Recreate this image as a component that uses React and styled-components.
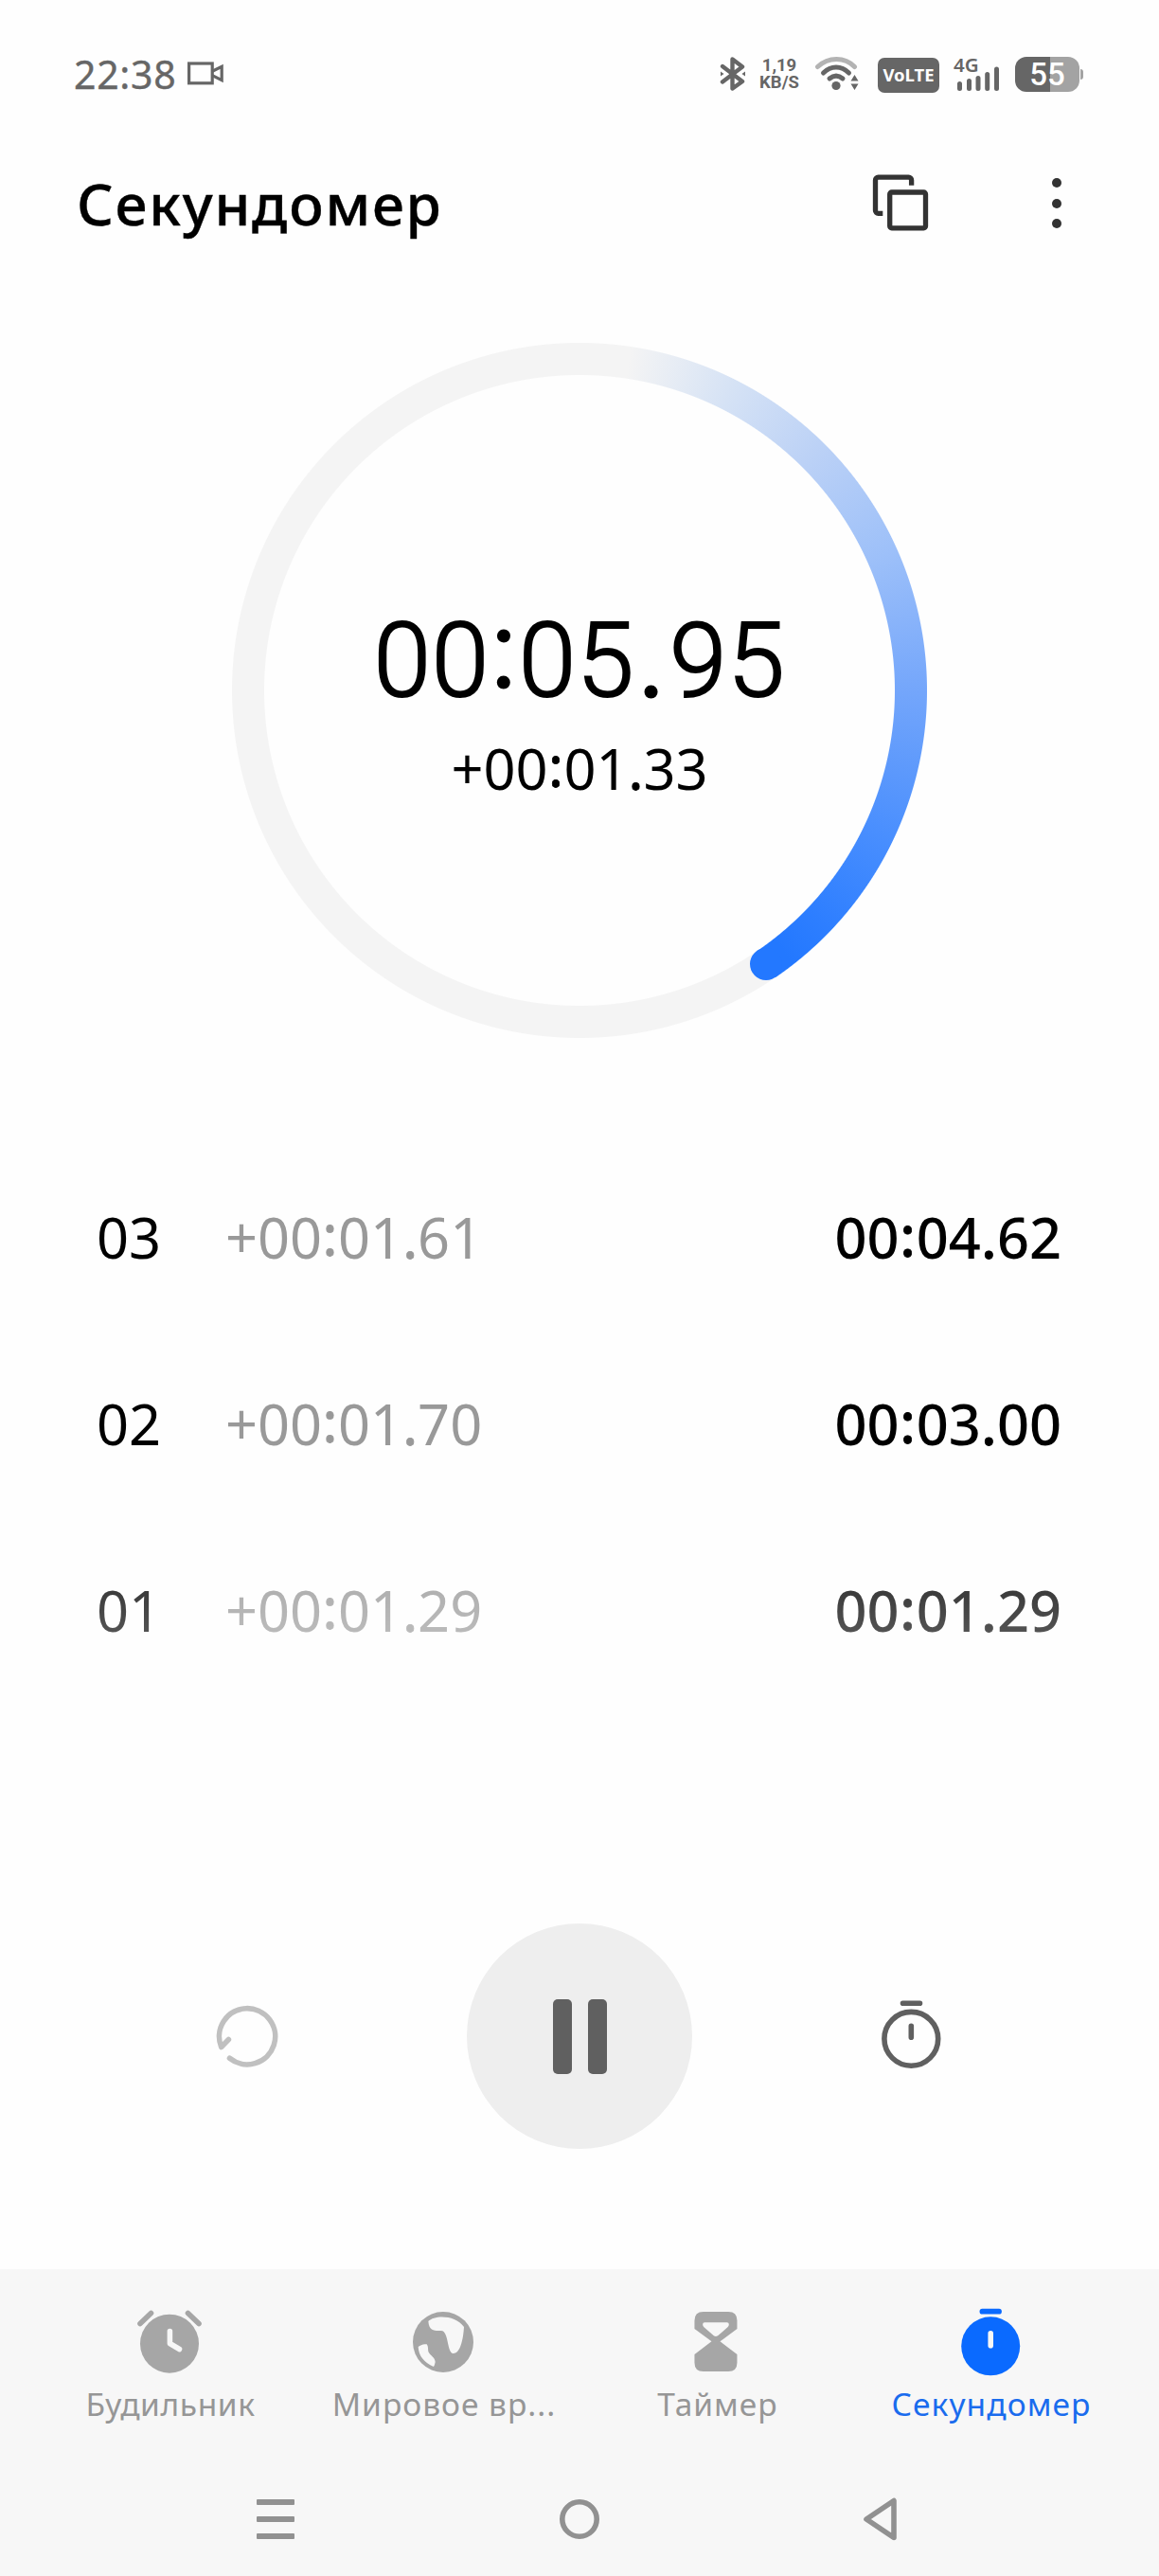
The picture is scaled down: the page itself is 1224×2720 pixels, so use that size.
import React from "react";
import styled, { createGlobalStyle } from "styled-components";

const GlobalStyle = createGlobalStyle`
  body {
    margin: 0;
    background: #fefefe;
  }
`;

const Screen = styled.div`
  display: flex;
  flex-direction: column;
  width: 1224px;
  height: 2720px;
  overflow: hidden;
  background: #fefefe;
  color: #000;
  font-family: "Noto Sans", "Open Sans", sans-serif;

  svg {
    display: block;
    flex: none;
  }
`;

const StatusBar = styled.header`
  display: flex;
  align-items: center;
  justify-content: space-between;
  height: 156px;
  padding: 0 80px 0 78px;
  color: #666;
`;

const StatusGroup = styled.div`
  display: flex;
  align-items: center;
`;

const Clock = styled.span`
  width: 120px;
  font-size: 41px;
  line-height: 60px;
  letter-spacing: 0.7px;
  -webkit-text-stroke: 0.4px #666;
`;

const Speed = styled.div`
  width: 48px;
  margin: 0 13px 0 11px;
  font-family: Roboto, sans-serif;
  font-size: 18.5px;
  font-weight: 700;
  line-height: 18px;
  text-align: center;
`;

const VolteBadge = styled.div`
  width: 65px;
  height: 37px;
  margin: 2px 15px 0 19px;
  border-radius: 7px;
  background: #666;
  color: #fff;
  font-size: 18.5px;
  font-weight: 700;
  line-height: 35px;
  text-align: center;
`;

const Signal = styled.div`
  width: 48px;
  height: 40px;
`;

const NetworkType = styled.div`
  height: 10px;
  font-size: 20.5px;
  font-weight: 600;
  line-height: 20px;
`;

const Battery = styled.div`
  display: flex;
  align-items: center;
  margin-left: 17px;
`;

const BatteryBody = styled.div`
  width: 68px;
  height: 37px;
  border-radius: 12px;
  background: linear-gradient(90deg, #666 ${p => p.level}%, #a3a3a3 ${p => p.level}%);
  color: #fff;
  font-family: Roboto, sans-serif;
  font-size: 33px;
  font-weight: 500;
  line-height: 38px;
  text-align: center;
`;

const BatteryTip = styled.div`
  width: 3px;
  height: 11px;
  margin-left: 1px;
  border-radius: 0 3px 3px 0;
  background: #a3a3a3;
`;

const TitleBar = styled.div`
  display: flex;
  align-items: center;
  height: 116px;
  padding: 0 98px 0 81px;
`;

const Title = styled.h1`
  flex: 1;
  margin: 2px 0 0;
  font-size: 60.5px;
  font-weight: 500;
  line-height: 80px;
  letter-spacing: 1.8px;
  -webkit-text-stroke: 0.4px #000;
`;

const Dial = styled.section`
  position: relative;
  display: flex;
  flex-direction: column;
  align-items: center;
  justify-content: center;
  width: 734px;
  height: 734px;
  margin: 90px auto 0;
  padding-top: 34px;
  box-sizing: border-box;
`;

const ringMask = "radial-gradient(circle closest-side, transparent 332.5px, #000 333.5px, #000 366.5px, transparent 367.5px)";

const Ring = styled.div`
  position: absolute;
  inset: 0;
  background: conic-gradient(
    #f4f4f4 8.5deg,
    #d5e2f5 27deg,
    #bbd1f6 45deg,
    #9dc0f9 66deg,
    #74a6fb 90deg,
    #5b98fc 105deg,
    #4a8ffe 115deg,
    #2d7eff 134deg,
    #2378ff 142deg,
    #2378ff 145.7deg,
    #f4f4f4 145.7deg
  );
  -webkit-mask: ${ringMask};
  mask: ${ringMask};
`;

const RingCap = styled.div`
  position: absolute;
  left: 547px;
  top: 639px;
  width: 34px;
  height: 34px;
  border-radius: 50%;
  background: #2378ff;
`;

const Elapsed = styled.div`
  font-family: Roboto, sans-serif;
  font-size: 109px;
  font-weight: 300;
  line-height: 112px;
  letter-spacing: 0.8px;
  -webkit-text-stroke: 2px #000;

  span {
    -webkit-text-stroke-width: 5px;
  }
`;

const LapElapsed = styled.div`
  margin-top: 17px;
  font-size: 59.5px;
  line-height: 80px;
`;

const Sep = styled.span`
  margin: 0 ${p => p.gap}px;
  line-height: 0;
  vertical-align: ${p => p.raise}px;
  -webkit-text-stroke: 0.8px;
`;

const LapList = styled.ul`
  height: 712px;
  margin: 111px 0 0;
  padding: 0 103px 0 102px;
  list-style: none;
  -webkit-mask-image: linear-gradient(#000 365px, rgba(0, 0, 0, 0.26) 712px);
  mask-image: linear-gradient(#000 365px, rgba(0, 0, 0, 0.26) 712px);
`;

const LapRow = styled.li`
  display: flex;
  align-items: center;
  height: 197px;
  font-size: 59.5px;
  line-height: 80px;
`;

const LapNumber = styled.span`
  width: 136px;
`;

const LapDelta = styled.span`
  flex: 1;
  color: #999;
`;

const LapTotal = styled.span`
  font-weight: 500;
`;

const Controls = styled.div`
  display: flex;
  align-items: center;
  justify-content: space-between;
  height: 238px;
  margin-top: 112px;
  padding: 0 212px;
`;

const PauseButton = styled.button`
  display: flex;
  align-items: center;
  justify-content: center;
  gap: 17px;
  width: 238px;
  height: 238px;
  padding: 0;
  border: none;
  border-radius: 50%;
  background: #eee;
`;

const PauseBar = styled.span`
  width: 20px;
  height: 79px;
  border-radius: 5px;
  background: #606060;
`;

const TabBar = styled.nav`
  display: flex;
  height: 204px;
  margin-top: 127px;
  padding: 0 34px;
  background: #f7f7f7;
`;

const Tab = styled.div`
  display: flex;
  flex-direction: column;
  align-items: center;
  width: 289px;
  padding-top: 41px;
  color: ${p => (p.$active ? "#0a6aff" : "#a6a6a6")};
`;

const TabLabel = styled.span`
  margin: 7px 0 0 3px;
  color: ${p => (p.$active ? "#1a6cee" : "#969696")};
  font-size: 33.5px;
  line-height: 44px;
  letter-spacing: ${p => p.$tracking || 0.6}px;
  white-space: nowrap;
`;

const SystemNav = styled.div`
  display: flex;
  align-items: center;
  justify-content: space-between;
  height: 120px;
  padding: 0 269px 0 267px;
  background: #f7f7f7;
`;

const laps = [
  { number: "03", delta: "+00:01.61", total: "00:04.62" },
  { number: "02", delta: "+00:01.70", total: "00:03.00" },
  { number: "01", delta: "+00:01.29", total: "00:01.29" },
];

// the colon sits a bit above the baseline, the dot stays on it
function Time({ value, raise = 3, colonGap = 0.5, dotGap = 0 }) {
  return value.split(/([:.])/).map((part, i) => {
    if (part === ":") return <Sep key={i} gap={colonGap} raise={raise}>:</Sep>;
    if (part === ".") return <Sep key={i} gap={dotGap} raise={0}>.</Sep>;
    return part;
  });
}

function CameraIcon() {
  return (
    <svg width="40" height="28" fill="none" stroke="#666" strokeWidth="3.2">
      <rect x="1.6" y="3" width="24.6" height="20.8" />
      <path d="M26.2 11.2 36.2 6.4v14.2l-10-5" />
    </svg>
  );
}

function BluetoothIcon() {
  return (
    <svg width="28" height="38" fill="none" stroke="#666" strokeWidth="4.4" strokeLinejoin="round" strokeLinecap="round">
      <path d="M3 11 24 27 13.5 34.5V3.5L24 11.5 3 27.5" />
      <path d="M1 16.5 4.5 19 1 21.5zM27 16.5 23.5 19l3.5 2.5z" fill="#666" stroke="none" />
    </svg>
  );
}

function WifiIcon() {
  return (
    <svg width="48" height="38" fill="none" strokeWidth="5" strokeLinecap="round">
      <path d="M3.5 11.5C15 0.8 32 0.8 42.5 11.5" stroke="#b3b3b3" />
      <path d="M9.5 18C17.5 10 28.5 10 36.5 18" stroke="#666" />
      <path d="M16 24C20.5 20.2 25.5 20.2 30 24" stroke="#666" />
      <circle cx="23" cy="31.5" r="4.6" fill="#666" />
      <path d="M38.5 26.5 42.5 20l4 6.5zM38.5 29.5h8l-4 6.5z" fill="#666" />
    </svg>
  );
}

function SignalBars() {
  return (
    <svg width="48" height="30" stroke="#666" strokeWidth="5" strokeLinecap="round">
      <path d="M6.5 20.5V25.5M16.5 17.5V25.5M26 14.5V25.5M35.7 10.5V25.5M45.5 5V25.5" />
    </svg>
  );
}

function CopyIcon() {
  return (
    <svg width="60" height="60" fill="none" stroke="#333" strokeWidth="5.3">
      <path d="M11.3 41.3H6.5a3 3 0 0 1-3-3V6.2a3 3 0 0 1 3-3H38.6a3 3 0 0 1 3 3V11.7" />
      <rect x="18.7" y="19" width="37.8" height="37.8" rx="2" />
    </svg>
  );
}

const MoreIcon = styled.div`
  display: grid;
  gap: 11.5px;
  margin: 1px 5px 0 130px;

  i {
    width: 10px;
    height: 10px;
    border-radius: 50%;
    background: #333;
  }
`;

function ResetIcon() {
  return (
    <svg width="100" height="100" fill="none" stroke="#c0c0c0" strokeWidth="5.6" strokeLinecap="round" strokeLinejoin="round">
      <path d="M30.5 73.3A29.6 29.6 0 1 0 21.7 61.5L29.4 53.5" />
    </svg>
  );
}

function LapIcon() {
  return (
    <svg width="100" height="100" fill="none" stroke="#606060" strokeWidth="5.6" strokeLinecap="round">
      <circle cx="50.3" cy="52.8" r="28.4" />
      <path d="M41.5 15.2H59.5M50.3 39.4V51.2" />
    </svg>
  );
}

function AlarmIcon() {
  return (
    <svg width="80" height="72" fill="none" strokeWidth="5.6" strokeLinecap="round" strokeLinejoin="round">
      <circle cx="40" cy="37.7" r="31" fill="currentColor" />
      <path d="M9 16.5 20.5 5.5M59.5 5.5 71 16.5" stroke="currentColor" />
      <path d="M40.4 24.5V37.5L50.5 43.5" stroke="#f7f7f7" />
    </svg>
  );
}

function WorldIcon() {
  return (
    <svg width="80" height="72">
      <g transform="translate(-8 -17) scale(0.3333)">
        <circle cx="144" cy="159" r="96" fill="currentColor" />
        <path
          d="M97 93C116 73 183 72 210 111C208 145 200 195 176 195C156 195 162 123 138 123C122 123 99 127 97 93ZM65 174C72 169 80 164 92 166C98 173 95 184 98 191C104 203 118 206 119 222Q118 230 114 237C84 224 67 204 65 174Z"
          fill="#f7f7f7"
        />
      </g>
    </svg>
  );
}

function TimerIcon() {
  return (
    <svg width="80" height="72">
      <g transform="translate(-296.5 -17) scale(0.3333)">
        <path
          d="M967 63H1046Q1074 63 1074 91V117L1020 157 1074 198V224Q1074 252 1046 252H967Q939 252 939 224V198L993 157 939 117V91Q939 63 967 63Z"
          fill="currentColor"
        />
        <path d="M971 97H1042Q1048 97 1048 103 1048 109 1044 112L1013 139Q1006 143 1000 139L969 112Q965 109 965 103 965 97 971 97Z" fill="#f7f7f7" />
      </g>
    </svg>
  );
}

function StopwatchIcon() {
  return (
    <svg width="80" height="72">
      <circle cx="40.2" cy="40.3" r="31" fill="currentColor" />
      <rect x="28.5" y="0.8" width="23.4" height="5.8" rx="2.9" fill="currentColor" />
      <rect x="37.4" y="24" width="5.6" height="18.5" rx="2.8" fill="#f7f7f7" />
    </svg>
  );
}

const tabs = [
  { label: "Будильник", Icon: AlarmIcon },
  { label: "Мировое вр...", Icon: WorldIcon, tracking: 1 },
  { label: "Таймер", Icon: TimerIcon, tracking: 1 },
  { label: "Секундомер", Icon: StopwatchIcon, tracking: 1.1, active: true },
];

export default function App() {
  return (
    <Screen>
      <GlobalStyle />
      <StatusBar>
        <StatusGroup>
          <Clock>22:38</Clock>
          <CameraIcon />
        </StatusGroup>
        <StatusGroup>
          <BluetoothIcon />
          <Speed>1,19<br />KB/S</Speed>
          <WifiIcon />
          <VolteBadge>VoLTE</VolteBadge>
          <Signal>
            <NetworkType>4G</NetworkType>
            <SignalBars />
          </Signal>
          <Battery>
            <BatteryBody level={55}>55</BatteryBody>
            <BatteryTip />
          </Battery>
        </StatusGroup>
      </StatusBar>

      <TitleBar>
        <Title>Секундомер</Title>
        <CopyIcon />
        <MoreIcon><i /><i /><i /></MoreIcon>
      </TitleBar>

      <Dial>
        <Ring />
        <RingCap />
        <Elapsed><Time value="00:05.95" raise={10} colonGap={3.5} dotGap={5} /></Elapsed>
        <LapElapsed><Time value="+00:01.33" /></LapElapsed>
      </Dial>

      <LapList>
        {laps.map(lap => (
          <LapRow key={lap.number}>
            <LapNumber>{lap.number}</LapNumber>
            <LapDelta><Time value={lap.delta} /></LapDelta>
            <LapTotal><Time value={lap.total} raise={2} colonGap={1} dotGap={0.5} /></LapTotal>
          </LapRow>
        ))}
      </LapList>

      <Controls>
        <ResetIcon />
        <PauseButton>
          <PauseBar />
          <PauseBar />
        </PauseButton>
        <LapIcon />
      </Controls>

      <TabBar>
        {tabs.map(({ label, Icon, tracking, active }) => (
          <Tab key={label} $active={active}>
            <Icon />
            <TabLabel $active={active} $tracking={tracking}>{label}</TabLabel>
          </Tab>
        ))}
      </TabBar>

      <SystemNav>
        <svg width="48" height="48" fill="#919191">
          <rect x="4" y="3" width="40" height="6" rx="1" />
          <rect x="4" y="21" width="40" height="6" rx="1" />
          <rect x="4" y="39" width="40" height="6" rx="1" />
        </svg>
        <svg width="48" height="48" fill="none" stroke="#919191" strokeWidth="5.6">
          <circle cx="25" cy="24" r="18.2" />
        </svg>
        <svg width="48" height="48" fill="none" stroke="#919191" strokeWidth="5.6" strokeLinejoin="round">
          <path d="M8 24 37 4.5V43.5Z" />
        </svg>
      </SystemNav>
    </Screen>
  );
}
